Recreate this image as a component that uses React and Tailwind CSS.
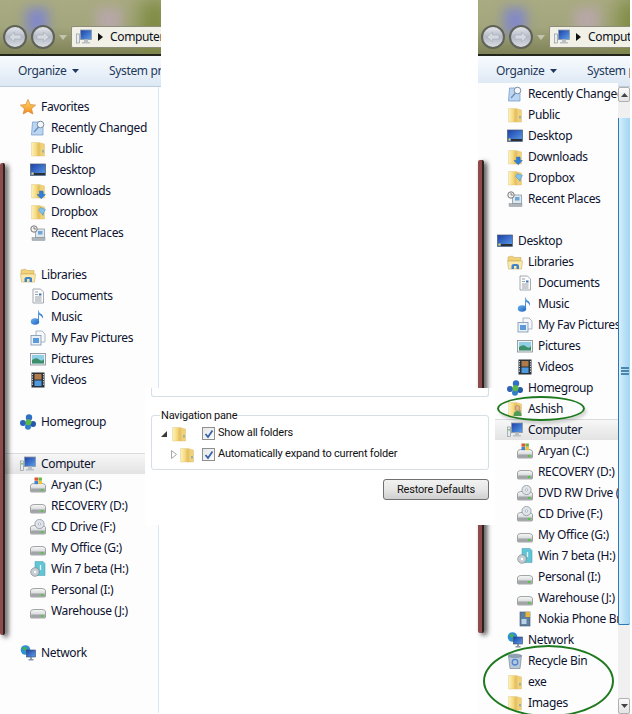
import React from 'react'

const Defs = () => (
  <svg className="absolute w-0 h-0">
    <defs>
      <linearGradient id="fold" x1="0" y1="0" x2="1" y2="0">
        <stop offset="0" stopColor="#fdf2bf" />
        <stop offset="0.55" stopColor="#f4d97f" />
        <stop offset="1" stopColor="#e3bb55" />
      </linearGradient>
      <linearGradient id="star" x1="0" y1="0" x2="0" y2="1">
        <stop offset="0" stopColor="#ffe070" />
        <stop offset="1" stopColor="#f08a20" />
      </linearGradient>
      <linearGradient id="screen" x1="0" y1="0" x2="1" y2="1">
        <stop offset="0" stopColor="#1a3fa8" />
        <stop offset="1" stopColor="#5ea0ea" />
      </linearGradient>
      <linearGradient id="drive" x1="0" y1="0" x2="0" y2="1">
        <stop offset="0" stopColor="#f8f8f8" />
        <stop offset="1" stopColor="#c2c5c7" />
      </linearGradient>
      <linearGradient id="note" x1="0" y1="0" x2="1" y2="1">
        <stop offset="0" stopColor="#6fb2ee" />
        <stop offset="1" stopColor="#1c62c0" />
      </linearGradient>
    </defs>
  </svg>
)

const Svg = ({ children }) => (
  <svg width="16" height="16" viewBox="0 0 16 16" className="shrink-0 block">{children}</svg>
)

const FolderShape = () => (
  <>
    <path d="M9 1.5 L14.5 3 V15 H9 Z" fill="#f0d078" stroke="#d8b968" strokeWidth="0.4" />
    <path d="M1.5 1.5 H8.5 L10 3 V15 H1.5 Z" fill="url(#fold)" stroke="#dcc074" strokeWidth="0.4" />
    <path d="M7.5 3.5 L10 2.5 V15 H7.5 Z" fill="#e6c262" />
    <rect x="12.5" y="9" width="1" height="2.5" fill="#4f8fd0" />
  </>
)

const DriveShape = () => (
  <>
    <path d="M0.5 8.5 Q1 6.5 4 6.5 H12 Q15 6.5 15.5 8.5 V14 Q15.5 15 14.5 15 H1.5 Q0.5 15 0.5 14 Z" fill="url(#drive)" stroke="#7d8183" strokeWidth="0.7" />
    <rect x="1.2" y="11.5" width="13.6" height="3" fill="#a0a4a6" />
    <rect x="11" y="12" width="2.2" height="2" fill="#4fc83c" />
  </>
)

const icons = {
  star: (
    <Svg>
      <polygon points="8,0.5 10.2,5.6 15.6,6.1 11.5,9.7 12.8,15 8,12.2 3.2,15 4.5,9.7 0.4,6.1 5.8,5.6" fill="url(#star)" stroke="#d9822b" strokeWidth="0.7" />
    </Svg>
  ),
  recent: (
    <Svg>
      <path d="M2.5 2 H11 L13 4 V15 H1.5 Z" fill="#bcd6f2" stroke="#6a93c8" strokeWidth="0.7" />
      <path d="M4 12 L8.5 7" stroke="#6a8fbd" strokeWidth="1.4" />
      <circle cx="10.5" cy="4.5" r="3.3" fill="#f4f8fc" stroke="#7d8ea3" />
    </Svg>
  ),
  folder: <Svg><FolderShape /></Svg>,
  desktop: (
    <Svg>
      <rect x="0.5" y="2" width="15" height="11.5" fill="url(#screen)" stroke="#4a5a70" strokeWidth="0.7" />
      <rect x="4" y="11" width="11" height="2" fill="#2b2f36" />
      <rect x="1.5" y="10.5" width="2" height="2" fill="#e6d75e" />
    </Svg>
  ),
  downloads: (
    <Svg>
      <FolderShape />
      <path d="M9.5 8 H13 V11.5 H15.5 L11.2 15.8 L7 11.5 H9.5 Z" fill="#2f7fdc" stroke="#1a5cb0" strokeWidth="0.4" />
    </Svg>
  ),
  dropbox: (
    <Svg>
      <FolderShape />
      <path d="M10.5 3.5 L15.5 5.5 L12.5 10.5 L8.5 6.5 Z" fill="#7fc0ee" stroke="#4a8ccc" strokeWidth="0.5" />
    </Svg>
  ),
  places: (
    <Svg>
      <rect x="5.5" y="4" width="9" height="8.5" fill="#dfe8ef" stroke="#7d8a94" strokeWidth="0.7" />
      <rect x="8" y="6" width="4.5" height="3.5" fill="#6fa5d8" />
      <circle cx="4" cy="4" r="3.2" fill="#f2f2f2" stroke="#777" />
      <path d="M4 2 V4 H6" stroke="#555" strokeWidth="0.7" fill="none" />
      <rect x="2" y="12.5" width="13" height="3" fill="#aeb4b8" stroke="#7d8a94" strokeWidth="0.4" />
    </Svg>
  ),
  libraries: (
    <Svg>
      <path d="M1 3 L5.5 2 L7 3.5 H14 V7 H1 Z" fill="#f1d27a" stroke="#c6a350" strokeWidth="0.5" />
      <path d="M0.5 7 H15.5 L14.5 15 H1.5 Z" fill="#fae9ac" stroke="#c6a350" strokeWidth="0.5" />
      <path d="M4.5 15 V11.5 Q4.5 10 7 10 H9.5 Q12 10 12 11.5 V15 H9.5 V12 H7 V15 Z" fill="#3f82c8" />
    </Svg>
  ),
  documents: (
    <Svg>
      <path d="M3 1 H10.5 L13.5 4 V15 H3 Z" fill="#fcfcfc" stroke="#8c96a0" strokeWidth="0.8" />
      <path d="M5 4 H8 M5 6.5 H8 M5 9 H11.5 M5 11 H11.5 M5 13 H11.5" stroke="#7d8894" strokeWidth="0.8" />
      <rect x="9" y="5.5" width="2.5" height="2" fill="#3d70b5" />
    </Svg>
  ),
  music: (
    <Svg>
      <ellipse cx="5" cy="12.5" rx="4.2" ry="3.2" fill="url(#note)" />
      <path d="M8 12 V0.5 Q9 4 12 5.5 Q13.5 7 12.5 10 Q12 6.5 9 6 V12 Z" fill="url(#note)" />
    </Svg>
  ),
  favpics: (
    <Svg>
      <path d="M6 1 H12 L15 4 V12 H6 Z" fill="#f6f8fb" stroke="#8c9bac" strokeWidth="0.7" />
      <rect x="1" y="5.5" width="10" height="9.5" fill="#e9f0f8" stroke="#7b93ad" strokeWidth="0.8" />
      <rect x="3" y="8" width="6" height="5" fill="#5b9ad6" />
    </Svg>
  ),
  pictures: (
    <Svg>
      <rect x="0.5" y="2.5" width="15" height="11.5" fill="#f0f2f4" stroke="#80888f" strokeWidth="0.8" />
      <rect x="2" y="4" width="12" height="8.5" fill="#8fd0e6" />
      <path d="M2 9 Q6 6 9 8.5 T14 8 V12.5 H2 Z" fill="#3d8f6a" />
    </Svg>
  ),
  videos: (
    <Svg>
      <rect x="1.5" y="0.5" width="13" height="15" fill="#2a3238" />
      <rect x="4.5" y="2" width="7" height="5.5" fill="#b07a48" />
      <rect x="4.5" y="8.5" width="7" height="5.5" fill="#4f9ade" />
      <path d="M2.5 2 V14 M13.5 2 V14" stroke="#d5dde3" strokeWidth="1" strokeDasharray="1.2 1.2" />
    </Svg>
  ),
  homegroup: (
    <Svg>
      <circle cx="3" cy="9" r="3" fill="#2c62b8" />
      <circle cx="9" cy="3.5" r="3.2" fill="#2f6fc6" />
      <circle cx="13" cy="10" r="3" fill="#2258a8" />
      <circle cx="8" cy="12.8" r="3" fill="#2f7fc8" />
      <circle cx="8.5" cy="8.2" r="3" fill="#5cb848" />
    </Svg>
  ),
  computer: (
    <Svg>
      <rect x="0.5" y="5" width="3" height="9.5" fill="#e8ecef" stroke="#7f8a92" strokeWidth="0.6" />
      <rect x="1.3" y="7" width="1.4" height="1.6" fill="#55b848" />
      <rect x="4.5" y="1" width="11" height="9.5" fill="url(#screen)" stroke="#8e98a2" strokeWidth="0.8" />
      <path d="M8 10.5 H12 V13 H14 V14.5 H6 V13 H8 Z" fill="#b9c0c6" />
    </Svg>
  ),
  system: (
    <Svg>
      <DriveShape />
      <rect x="4.5" y="0.5" width="3.5" height="3.2" fill="#e2552c" />
      <rect x="8.4" y="0.5" width="3.5" height="3.2" fill="#6cb33f" />
      <rect x="4.5" y="4" width="3.5" height="3.2" fill="#3f82d8" />
      <rect x="8.4" y="4" width="3.5" height="3.2" fill="#f0c22e" />
    </Svg>
  ),
  drive: <Svg><DriveShape /></Svg>,
  cd: (
    <Svg>
      <DriveShape />
      <circle cx="9.5" cy="5" r="4.6" fill="#dfe5ea" stroke="#7e8a92" strokeWidth="0.7" />
      <circle cx="9.5" cy="5" r="1.2" fill="#fff" stroke="#7e8a92" strokeWidth="0.5" />
    </Svg>
  ),
  disc: (
    <Svg>
      <path d="M5 0.5 H13 L15 2.5 V14.5 H5 Z" fill="#62c4d4" stroke="#3f9fb2" strokeWidth="0.5" />
      <path d="M10.5 4 V9" stroke="#e8f8fb" strokeWidth="1.3" />
      <circle cx="5" cy="11" r="4.3" fill="#c7ced3" stroke="#6f7a82" strokeWidth="0.6" />
      <circle cx="5" cy="11" r="1.2" fill="#fff" />
    </Svg>
  ),
  phone: (
    <Svg>
      <rect x="3" y="1" width="10" height="14" fill="#5f7f9f" stroke="#3c5470" strokeWidth="0.6" />
      <rect x="8.5" y="1" width="4.5" height="5" fill="#e6b53a" />
      <rect x="4.5" y="8" width="5" height="5" fill="#b9d2e8" />
    </Svg>
  ),
  network: (
    <Svg>
      <circle cx="5.5" cy="5" r="4.8" fill="#2f8fd8" />
      <path d="M2 3 Q5 1 7 3 L5 6 Z M5 8 L8 6 V9 Z" fill="#48b04a" />
      <rect x="6.5" y="5" width="9" height="7" fill="url(#screen)" stroke="#3c4c64" strokeWidth="0.6" />
      <path d="M10 12 H12 V14 H13.5 V15.5 H8.5 V14 H10 Z" fill="#8c98a4" />
    </Svg>
  ),
  recycle: (
    <Svg>
      <path d="M1.5 2.5 H14.5 L13 15.5 H3 Z" fill="#b9c8d8" stroke="#75879b" strokeWidth="0.7" />
      <ellipse cx="8" cy="2.8" rx="6.5" ry="1.8" fill="#8fa0b2" stroke="#75879b" strokeWidth="0.5" />
      <circle cx="8" cy="9.2" r="2.8" fill="none" stroke="#4c86d0" strokeWidth="1.3" />
    </Svg>
  ),
  user: (
    <Svg>
      <FolderShape />
      <circle cx="10.5" cy="7" r="2.5" fill="#e2b58a" stroke="#7c5a3c" strokeWidth="0.4" />
      <path d="M6.5 15 Q6.5 10 10.5 10 Q14.5 10 14.5 15 Z" fill="#4f9a58" />
    </Svg>
  ),
}

const leftTree = [
  { l: 0, i: 'star', t: 'Favorites' },
  { l: 1, i: 'recent', t: 'Recently Changed' },
  { l: 1, i: 'folder', t: 'Public' },
  { l: 1, i: 'desktop', t: 'Desktop' },
  { l: 1, i: 'downloads', t: 'Downloads' },
  { l: 1, i: 'dropbox', t: 'Dropbox' },
  { l: 1, i: 'places', t: 'Recent Places' },
  {},
  { l: 0, i: 'libraries', t: 'Libraries' },
  { l: 1, i: 'documents', t: 'Documents' },
  { l: 1, i: 'music', t: 'Music' },
  { l: 1, i: 'favpics', t: 'My Fav Pictures' },
  { l: 1, i: 'pictures', t: 'Pictures' },
  { l: 1, i: 'videos', t: 'Videos' },
  {},
  { l: 0, i: 'homegroup', t: 'Homegroup' },
  {},
  { l: 0, i: 'computer', t: 'Computer', sel: true },
  { l: 1, i: 'system', t: 'Aryan (C:)' },
  { l: 1, i: 'drive', t: 'RECOVERY (D:)' },
  { l: 1, i: 'cd', t: 'CD Drive (F:)' },
  { l: 1, i: 'drive', t: 'My Office (G:)' },
  { l: 1, i: 'disc', t: 'Win 7 beta (H:)' },
  { l: 1, i: 'drive', t: 'Personal (I:)' },
  { l: 1, i: 'drive', t: 'Warehouse (J:)' },
  {},
  { l: 0, i: 'network', t: 'Network' },
]

const rightTree = [
  { l: 1, i: 'recent', t: 'Recently Changed' },
  { l: 1, i: 'folder', t: 'Public' },
  { l: 1, i: 'desktop', t: 'Desktop' },
  { l: 1, i: 'downloads', t: 'Downloads' },
  { l: 1, i: 'dropbox', t: 'Dropbox' },
  { l: 1, i: 'places', t: 'Recent Places' },
  {},
  { l: 0, i: 'desktop', t: 'Desktop' },
  { l: 1, i: 'libraries', t: 'Libraries' },
  { l: 2, i: 'documents', t: 'Documents' },
  { l: 2, i: 'music', t: 'Music' },
  { l: 2, i: 'favpics', t: 'My Fav Pictures' },
  { l: 2, i: 'pictures', t: 'Pictures' },
  { l: 2, i: 'videos', t: 'Videos' },
  { l: 1, i: 'homegroup', t: 'Homegroup' },
  { l: 1, i: 'user', t: 'Ashish' },
  { l: 1, i: 'computer', t: 'Computer', sel: true },
  { l: 2, i: 'system', t: 'Aryan (C:)' },
  { l: 2, i: 'drive', t: 'RECOVERY (D:)' },
  { l: 2, i: 'cd', t: 'DVD RW Drive (E:)' },
  { l: 2, i: 'cd', t: 'CD Drive (F:)' },
  { l: 2, i: 'drive', t: 'My Office (G:)' },
  { l: 2, i: 'disc', t: 'Win 7 beta (H:)' },
  { l: 2, i: 'drive', t: 'Personal (I:)' },
  { l: 2, i: 'drive', t: 'Warehouse (J:)' },
  { l: 2, i: 'phone', t: 'Nokia Phone Browser' },
  { l: 1, i: 'network', t: 'Network' },
  { l: 1, i: 'recycle', t: 'Recycle Bin' },
  { l: 1, i: 'folder', t: 'exe' },
  { l: 1, i: 'folder', t: 'Images' },
]

const indent = { 0: 'pl-[20px]', 1: 'pl-[30px]', 2: 'pl-[40px]' }

const TreeRow = ({ row }) => {
  if (!row.t) return <div className="h-[21px]" />
  return (
    <div className={`h-[21px] flex items-center gap-[5px] whitespace-nowrap ${indent[row.l]} ${row.sel ? 'bg-gradient-to-b from-[#f7f7f7] to-[#e3e3e3] border-t border-[#d8dcdf]' : ''}`}>
      {icons[row.i]}
      <span>{row.t}</span>
    </div>
  )
}

const GlassButton = ({ flip }) => (
  <div className="w-[24px] h-[24px] shrink-0 rounded-full border-2 border-[#5f6258] bg-gradient-to-b from-[#e4e6ea] via-[#b4b9c6] to-[#dadde0] flex items-center justify-center">
    <svg width="14" height="12" viewBox="0 0 14 12" className={flip ? 'rotate-180' : ''}>
      <path d="M1 6 L6.5 1 V4 H13 V8 H6.5 V11 Z" fill="#d4d9e0" stroke="#a6adb8" strokeWidth="0.6" />
    </svg>
  </div>
)

const Chrome = () => (
  <div className="shrink-0">
    <div className="relative h-[56px] overflow-hidden bg-gradient-to-b from-[#a9ab82] via-[#a3a67c] to-[#7f8257] border-b-2 border-[#23251c]">
      <div className="absolute left-[26px] top-[8px] w-[22px] h-[26px] bg-[#8288c8] blur-[6px]" />
      <div className="absolute left-[96px] top-[8px] w-[26px] h-[24px] bg-[#b7a7a8] blur-[6px]" />
      <div className="absolute left-[140px] top-0 w-[30px] h-[54px] bg-[#7d8a40] blur-[10px]" />
      <div className="relative flex items-start pt-[25px] pl-[3px]">
        <GlassButton />
        <div className="ml-[4px] shrink-0"><GlassButton flip /></div>
        <svg width="8" height="5" viewBox="0 0 8 5" className="ml-[4px] mt-[10px] shrink-0"><path d="M0 0 H8 L4 5 Z" fill="#c4c5b0" /></svg>
        <div className="ml-[4px] mt-[1px] w-[200px] shrink-0 h-[22px] flex items-center bg-[#f1f1e8] border border-[#8d8d7a] rounded-[2px] pl-[4px] text-[#0b1020]">
          <svg width="16" height="16" viewBox="0 0 16 16" className="shrink-0">
            <rect x="0.5" y="5" width="3" height="9" fill="#e8ecef" stroke="#7f8a92" strokeWidth="0.6" />
            <rect x="4.5" y="1" width="11" height="9.5" fill="url(#screen)" stroke="#8e98a2" strokeWidth="0.8" />
            <path d="M8 10.5 H12 V13 H14 V14.5 H6 V13 H8 Z" fill="#b9c0c6" />
          </svg>
          <svg width="5" height="8" viewBox="0 0 5 8" className="ml-[6px] shrink-0"><path d="M0 0 L5 4 L0 8 Z" fill="#111" /></svg>
          <span className="ml-[7px]">Computer</span>
        </div>
      </div>
    </div>
    <div className="h-[31px] flex items-center pl-[18px] bg-gradient-to-b from-[#f8fbfe] to-[#dce8f4] border-b border-[#bccddd] text-[#1e395b] whitespace-nowrap">
      <span className="w-[54px] shrink-0">Organize</span>
      <svg width="7" height="4" viewBox="0 0 7 4" className="shrink-0"><path d="M0 0 H7 L3.5 4 Z" fill="#1e395b" /></svg>
      <span className="ml-[30px]">System properties</span>
    </div>
  </div>
)

const RedBar = ({ className }) => (
  <div className={`absolute bg-[#8d4b4b] border-r-2 border-[#2e2020] rounded-[2px] shadow-[3px_2px_5px_rgba(0,0,0,0.7)] ${className}`} />
)

const Checkbox = () => (
  <div className="w-[13px] h-[13px] shrink-0 border border-[#8e8f8f] bg-gradient-to-br from-[#e4e6e8] to-[#fbfbfb] flex items-center justify-center">
    <svg width="10" height="10" viewBox="0 0 10 10">
      <path d="M1.5 5 L4 8 L8.5 1.5" fill="none" stroke="#3a62a8" strokeWidth="1.8" />
    </svg>
  </div>
)

const FolderOptions = () => (
  <div className="absolute left-[145px] top-[388px] w-[350px] h-[137px] bg-white text-[#111] text-[11px] tracking-[-0.2px] font-['Roboto',sans-serif] pl-[6px] pr-[6px]">
    <div className="h-[9px] border border-t-0 border-[#d5dfe5] rounded-b-[3px]" />
    <div className="relative mt-[18px] h-[55px] border border-[#d5dfe5] rounded-[3px] pt-[7px]">
      <span className="absolute left-[8px] -top-[8px] bg-white px-px leading-[16px]">Navigation pane</span>
      <div className="flex items-center h-[21px] pl-[9px]">
        <svg width="6" height="6" viewBox="0 0 6 6" className="shrink-0"><path d="M6 0 V6 H0 Z" fill="#3a3a3a" /></svg>
        <div className="ml-[4px] w-[16px] shrink-0"><Svg><FolderShape /></Svg></div>
        <div className="ml-[15px]"><Checkbox /></div>
        <span className="ml-[3px]">Show all folders</span>
      </div>
      <div className="flex items-center h-[21px] pl-[19px]">
        <svg width="6" height="9" viewBox="0 0 6 9" className="shrink-0"><path d="M0.5 0.5 L5.5 4.5 L0.5 8.5 Z" fill="#fff" stroke="#a6a6a6" /></svg>
        <div className="ml-[2px] w-[16px] shrink-0"><Svg><FolderShape /></Svg></div>
        <div className="ml-[7px]"><Checkbox /></div>
        <span className="ml-[3px]">Automatically expand to current folder</span>
      </div>
    </div>
    <div className="flex justify-end mt-[9px]">
      <button className="w-[106px] h-[21px] rounded-[3px] border border-[#707070] bg-gradient-to-b from-[#f2f2f2] via-[#e6e6e6] to-[#cfcfcf] text-[#111] leading-none">
        Restore Defaults
      </button>
    </div>
  </div>
)

const App = () => {
  return (
    <div className="relative w-[632px] h-[714px] overflow-hidden bg-white flex text-[12px] tracking-[-0.35px] text-[#0c1230] font-['Noto_Sans',sans-serif]">
      <Defs />

      <div className="w-[161px] shrink-0 flex flex-col overflow-hidden">
        <Chrome />
        <div className="h-[626px] mr-[2px] pt-[9px] border-r border-[#d9e6f3] overflow-hidden bg-[#fdfdfd]">
          {leftTree.map((row, i) => <TreeRow key={i} row={row} />)}
        </div>
      </div>

      <div className="flex-1 bg-white" />

      <div className="w-[152px] shrink-0 mr-[2px] flex flex-col overflow-hidden">
        <Chrome />
        <div className="flex flex-1 min-h-0">
          <div className="w-[140px] shrink-0 overflow-hidden bg-[#fdfdfd] -mt-[4px]">
            <div className="-ml-[1px]">
              {rightTree.map((row, i) => <TreeRow key={i} row={row} />)}
            </div>
          </div>
          <div className="flex-1 flex flex-col bg-[#f0f0f0]">
            <div className="h-[15px] shrink-0 bg-gradient-to-b from-[#fbfbfb] to-[#e4e4e4] border border-[#b0b0b0] rounded-[2px] flex items-center justify-center">
              <svg width="7" height="4" viewBox="0 0 7 4"><path d="M3.5 0 L7 4 H0 Z" fill="#444" /></svg>
            </div>
            <div className="h-[16px] shrink-0" />
            <div className="flex-1 bg-gradient-to-r from-[#d8f0fc] via-[#b8e0f7] to-[#a3d5f3] border-l border-b border-[#2e78b8] rounded-b-[2px] flex items-center justify-center">
              <div className="flex flex-col gap-[1px]">
                <div className="w-[8px] h-[2px] bg-[#4a86ad]" />
                <div className="w-[8px] h-[2px] bg-[#4a86ad]" />
                <div className="w-[8px] h-[2px] bg-[#4a86ad]" />
              </div>
            </div>
            <div className="h-[73px] shrink-0" />
            <div className="h-[16px] shrink-0 bg-gradient-to-b from-[#fbfbfb] to-[#e4e4e4] border border-[#b0b0b0] rounded-[2px] flex items-center justify-center">
              <svg width="7" height="4" viewBox="0 0 7 4"><path d="M0 0 H7 L3.5 4 Z" fill="#444" /></svg>
            </div>
          </div>
        </div>
      </div>

      <RedBar className="left-0 top-[163px] w-[5px] h-[472px]" />
      <RedBar className="left-[478px] top-[160px] w-[6px] h-[473px]" />
      <FolderOptions />

      <div className="absolute left-[497px] top-[396px] w-[88px] h-[25px] rounded-[50%] border-2 border-[#1f7a1f] shadow-[2px_3px_3px_rgba(0,0,0,0.15)]" />
      <div className="absolute left-[483px] top-[645px] w-[131px] h-[72px] rounded-[50%] border-2 border-[#1f7a1f]" />
    </div>
  )
}

export default App
